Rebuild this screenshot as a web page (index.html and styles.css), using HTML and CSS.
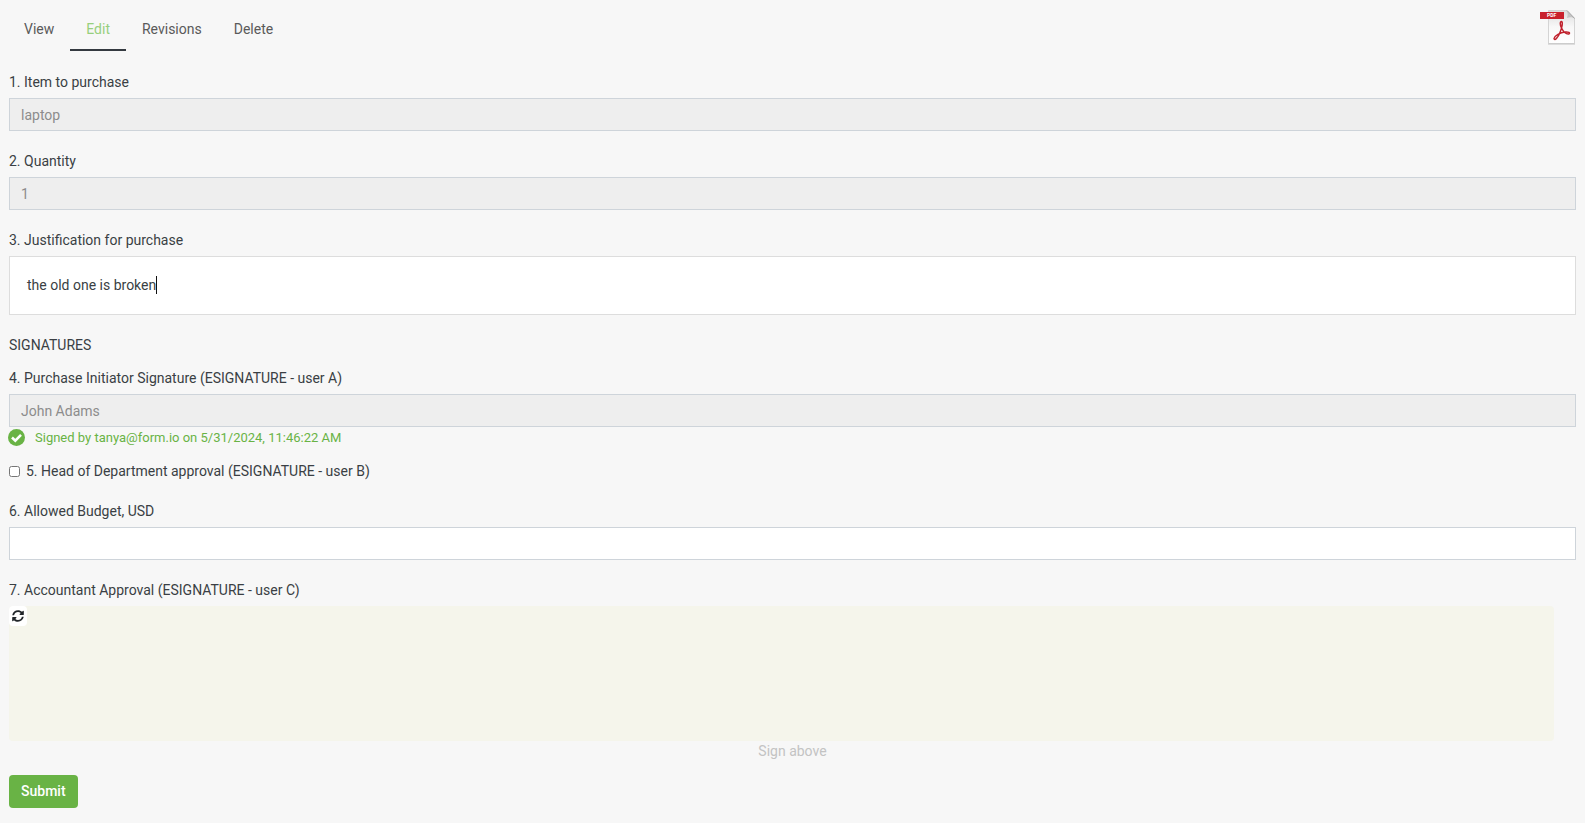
FILE: index.html
```html
<!DOCTYPE html>
<html lang="en">
<head>
  <meta charset="UTF-8" />
  <meta name="viewport" content="width=device-width, initial-scale=1.0" />
  <title>Purchase Request</title>
  <link rel="stylesheet" href="styles.css">
</head>
<body>
  <header class="topbar">
    <nav class="tabs">
      <a href="#view" class="tab">View</a>
      <a href="#edit" class="tab active">Edit</a>
      <a href="#revisions" class="tab">Revisions</a>
      <a href="#delete" class="tab">Delete</a>
    </nav>
    <a href="#pdf" class="pdf-link" aria-label="Download PDF">
      <svg width="36" height="36" viewBox="0 0 36 36">
        <defs>
          <linearGradient id="paper" x1="0" y1="0" x2="0" y2="1">
            <stop offset="0" stop-color="#dcdcdc" />
            <stop offset="0.5" stop-color="#f8f8f8" />
            <stop offset="1" stop-color="#ffffff" />
          </linearGradient>
        </defs>
        <path d="M8.500 0.500H27L34.500 8V33.500H8.500Z" fill="url(#paper)" stroke="#d4d4d4" />
        <path d="M8 34H35" stroke="#c4c4c4" />
        <path d="M26 0C28 2 28 5 27 8C30 6.500 33 7 35 9Z" fill="#c4c4c4" />
        <path d="M27 0.500L34.500 8.500" stroke="#a8a8a8" />
        <rect x="0" y="2" width="24" height="7" fill="#c9202c" />
        <text x="7" y="7" class="pdf-text">PDF</text>
        <path d="M21.500 11.500C19.800 11.500 20 15 21.500 18C23.300 21.500 26.500 24.500 29 24C30.500 23 28.500 21.500 25 22C20.500 22.500 14.500 25.500 14 28.500C14.500 31.500 18 27.500 20 22.500C22 17.500 23.200 12 21.500 11.500Z" fill="none" stroke="#c0202c" stroke-width="1.500" stroke-linejoin="round" />
      </svg>
    </a>
  </header>

  <form class="form">
    <div class="field">
      <label for="item">1. Item to purchase</label>
      <input type="text" id="item" class="control" value="laptop" disabled>
    </div>
    <div class="field">
      <label for="quantity">2. Quantity</label>
      <input type="text" id="quantity" class="control" value="1" disabled>
    </div>
    <div class="field">
      <label for="justification">3. Justification for purchase</label>
      <div class="editor">
        <div id="justification" class="editor-text" role="textbox" contenteditable="true" aria-label="3. Justification for purchase">the old one is broken<span class="caret"></span></div>
      </div>
    </div>

    <p class="section-title">SIGNATURES</p>

    <div class="field signed-field">
      <label for="initiator">4. Purchase Initiator Signature (ESIGNATURE - user A)</label>
      <input type="text" id="initiator" class="control" value="John Adams" disabled>
      <div class="signed">
        <svg width="17" height="17" viewBox="0 0 17 17">
          <circle cx="8.500" cy="8.500" r="8.500" fill="#69b345" />
          <path d="M4 8.500L7.300 11.600L13 5.900" fill="none" stroke="#fff" stroke-width="2.600" />
        </svg>
        <span>Signed by tanya@form.io on 5/31/2024, 11:46:22 AM</span>
      </div>
    </div>
    <div class="field check-field">
      <input type="checkbox" id="head">
      <label for="head">5. Head of Department approval (ESIGNATURE - user B)</label>
    </div>
    <div class="field">
      <label for="budget">6. Allowed Budget, USD</label>
      <input type="text" id="budget" class="control">
    </div>
    <div class="signature">
      <span class="signature-label">7. Accountant Approval (ESIGNATURE - user C)</span>
      <div class="pad">
        <button type="button" class="refresh" aria-label="Clear signature">
          <svg width="12" height="12" viewBox="0 0 512 512" fill="#212529">
            <path d="M370.720 133.280C339.458 104.008 298.888 87.962 255.848 88c-77.458.068-144.328 53.178-162.791 126.850-1.344 5.363-6.122 9.150-11.651 9.150H24.103c-7.498 0-13.194-6.807-11.807-14.176C33.933 94.924 134.813 8 256 8c66.448 0 126.791 26.136 171.315 68.685L463.030 40.970C478.149 25.851 504 36.559 504 57.941V192c0 13.255-10.745 24-24 24H345.941c-21.382 0-32.090-25.851-16.971-40.971l41.750-41.749zM32 296h134.059c21.382 0 32.090 25.851 16.971 40.971l-41.750 41.750c31.262 29.273 71.835 45.319 114.876 45.280 77.418-.070 144.315-53.144 162.787-126.849 1.344-5.363 6.122-9.150 11.651-9.150h57.304c7.498 0 13.194 6.807 11.807 14.176C478.067 417.076 377.187 504 256 504c-66.448 0-126.791-26.136-171.315-68.685L48.970 471.030C33.851 486.149 8 475.441 8 454.059V320c0-13.255 10.745-24 24-24z" />
          </svg>
        </button>
      </div>
      <div class="signature-hint">Sign above</div>
    </div>
    <button type="submit" class="submit">Submit</button>
  </form>
</body>
</html>
```
FILE: styles.css
```css
* {
  box-sizing: border-box;
}

body {
  margin: 0;
  padding: 8px 9px 15px;
  background-color: #f7f7f7;
  color: #3a3f44;
  font-family: Roboto, sans-serif;
  font-size: 14px;
  line-height: 20px;
}

.topbar {
  display: flex;
  justify-content: space-between;
  align-items: flex-start;
  margin-bottom: 21px;
}
.tabs {
  display: flex;
  margin-left: -1px;
}
.tab {
  padding: 11px 16px 10px;
  border-bottom: 2px solid transparent;
  color: #5a5a5a;
  text-decoration: none;
}
.tab.active {
  color: #97cf7d;
  border-bottom-color: #343a40;
}
.pdf-link {
  display: block;
  padding-top: 2px;
}
.pdf-link svg {
  display: block;
}
.pdf-text {
  fill: #fff;
  font-size: 5px;
  font-weight: bold;
}

.field {
  display: flex;
  flex-direction: column;
  gap: 6px;
  margin-bottom: 20px;
}
.control {
  width: 100%;
  height: 33px;
  padding: 5px 11px;
  border: 1px solid #ced4da;
  border-radius: 0;
  background-color: #fff;
  color: #3a3f44;
  font: inherit;
}
.control:disabled {
  background-color: #eee;
  color: #8c8c8c;
}

.editor {
  padding: 18px 17px;
  border: 1px solid #ddd;
  background-color: #fff;
}
.editor-text {
  display: flex;
  align-items: flex-start;
  height: 21px;
  outline: none;
}
.caret {
  width: 1px;
  height: 18px;
  margin-top: 1px;
  background-color: #111;
}

.section-title {
  margin: 0 0 13px;
}

.signed-field {
  margin-bottom: 13px;
}
.signed {
  display: flex;
  align-items: center;
  gap: 10px;
  margin-top: -6px;
  margin-left: -1px;
  height: 21px;
  color: #69b345;
  font-size: 13px;
}

.check-field {
  flex-direction: row;
  align-items: center;
}
.check-field input {
  width: 11px;
  height: 11px;
  margin: 0;
}

.signature-label {
  display: block;
  margin-bottom: 6px;
}
.pad {
  height: 135px;
  margin-right: 22px;
  border-radius: 4px;
  background-color: #f5f5eb;
}
.refresh {
  display: flex;
  align-items: center;
  justify-content: center;
  width: 18px;
  height: 20px;
  padding: 0 0 1px;
  border: none;
  border-radius: 4px;
  background-color: #fff;
  cursor: pointer;
}
.signature-hint {
  margin-bottom: 14px;
  color: #c3c3c3;
  text-align: center;
}

.submit {
  height: 33px;
  padding: 0 12px 1px;
  border: none;
  border-radius: 4px;
  background-color: #69b345;
  color: #fff;
  font: inherit;
  font-weight: 500;
  cursor: pointer;
}
```
